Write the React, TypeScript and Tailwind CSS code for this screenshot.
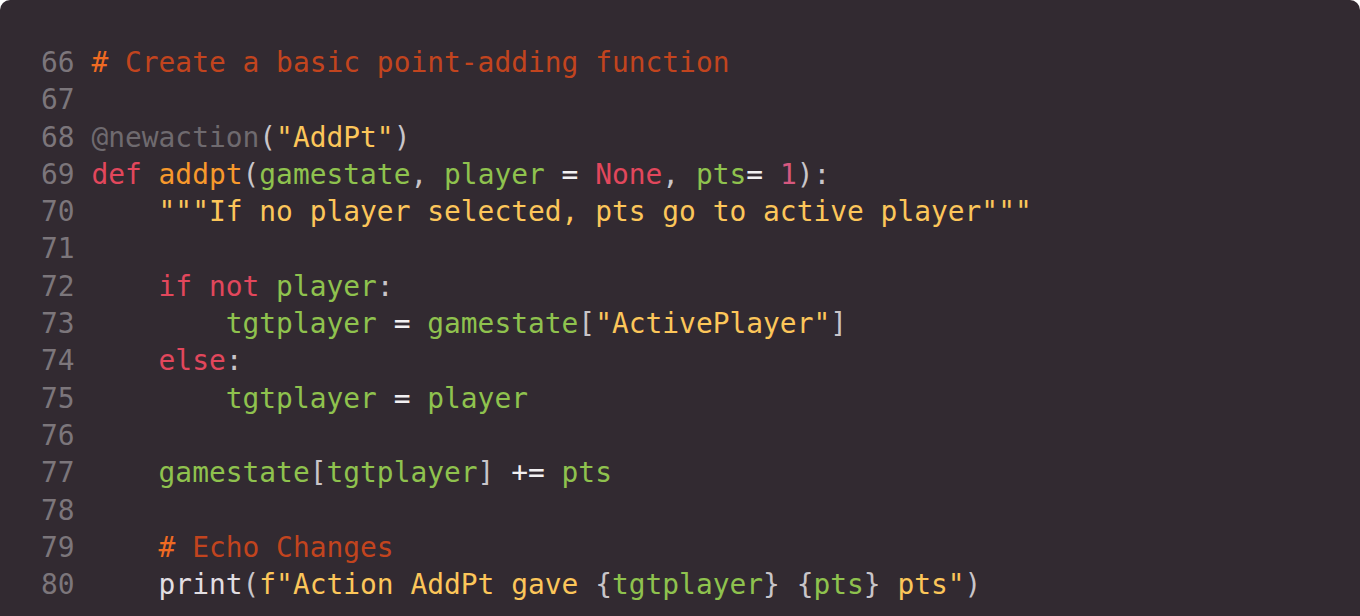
import React from "react";

type Tok = [string, string];

const C = {
  num: "text-[#7c767b]",
  hash: "text-[#ef6a22]",
  com: "text-[#c2441e]",
  dec: "text-[#6f6a6f]",
  str: "text-[#fcc65a]",
  kw: "text-[#e2475c]",
  fn: "text-[#f8992c]",
  id: "text-[#8fc24e]",
  op: "text-[#f2f0f2]",
  bi: "text-[#e2dee2]",
  pn: "text-[#c9c5c9]",
  no: "text-[#d6587f]",
};

const lines: Tok[][] = [
  [[C.hash, "#"], [C.com, " Create a basic point-adding function"]],
  [],
  [[C.dec, "@newaction"], [C.pn, "("], [C.str, '"AddPt"'], [C.pn, ")"]],
  [
    [C.kw, "def "],
    [C.fn, "addpt"],
    [C.pn, "("],
    [C.id, "gamestate"],
    [C.pn, ", "],
    [C.id, "player "],
    [C.op, "= "],
    [C.kw, "None"],
    [C.pn, ", "],
    [C.id, "pts"],
    [C.op, "= "],
    [C.no, "1"],
    [C.pn, "):"],
  ],
  [[C.str, '    """If no player selected, pts go to active player"""']],
  [],
  [[C.kw, "    if not "], [C.id, "player"], [C.pn, ":"]],
  [
    [C.id, "        tgtplayer "],
    [C.op, "= "],
    [C.id, "gamestate"],
    [C.pn, "["],
    [C.str, '"ActivePlayer"'],
    [C.pn, "]"],
  ],
  [[C.kw, "    else"], [C.pn, ":"]],
  [[C.id, "        tgtplayer "], [C.op, "= "], [C.id, "player"]],
  [],
  [
    [C.id, "    gamestate"],
    [C.pn, "["],
    [C.id, "tgtplayer"],
    [C.pn, "] "],
    [C.op, "+= "],
    [C.id, "pts"],
  ],
  [],
  [[C.hash, "    #"], [C.com, " Echo Changes"]],
  [
    [C.bi, "    print"],
    [C.pn, "("],
    [C.str, 'f"Action AddPt gave '],
    [C.pn, "{"],
    [C.id, "tgtplayer"],
    [C.pn, "} {"],
    [C.id, "pts"],
    [C.pn, "}"],
    [C.str, ' pts"'],
    [C.pn, ")"],
  ],
];

const App = () => {
  return (
    <div className="w-[1360px] h-[616px] bg-white overflow-hidden">
      <div className="h-[640px] bg-[#322a31] rounded-[10px] pt-[44px] pl-[41px] font-['DejaVu_Sans_Mono',monospace] text-[27.9px] leading-[37.3px] whitespace-pre">
        {lines.map((toks, i) => (
          <div key={i} className="h-[37.3px]">
            <span className={C.num}>{66 + i} </span>
            {toks.map(([cls, t], j) => (
              <span key={j} className={cls}>
                {t}
              </span>
            ))}
          </div>
        ))}
      </div>
    </div>
  );
};

export default App;
